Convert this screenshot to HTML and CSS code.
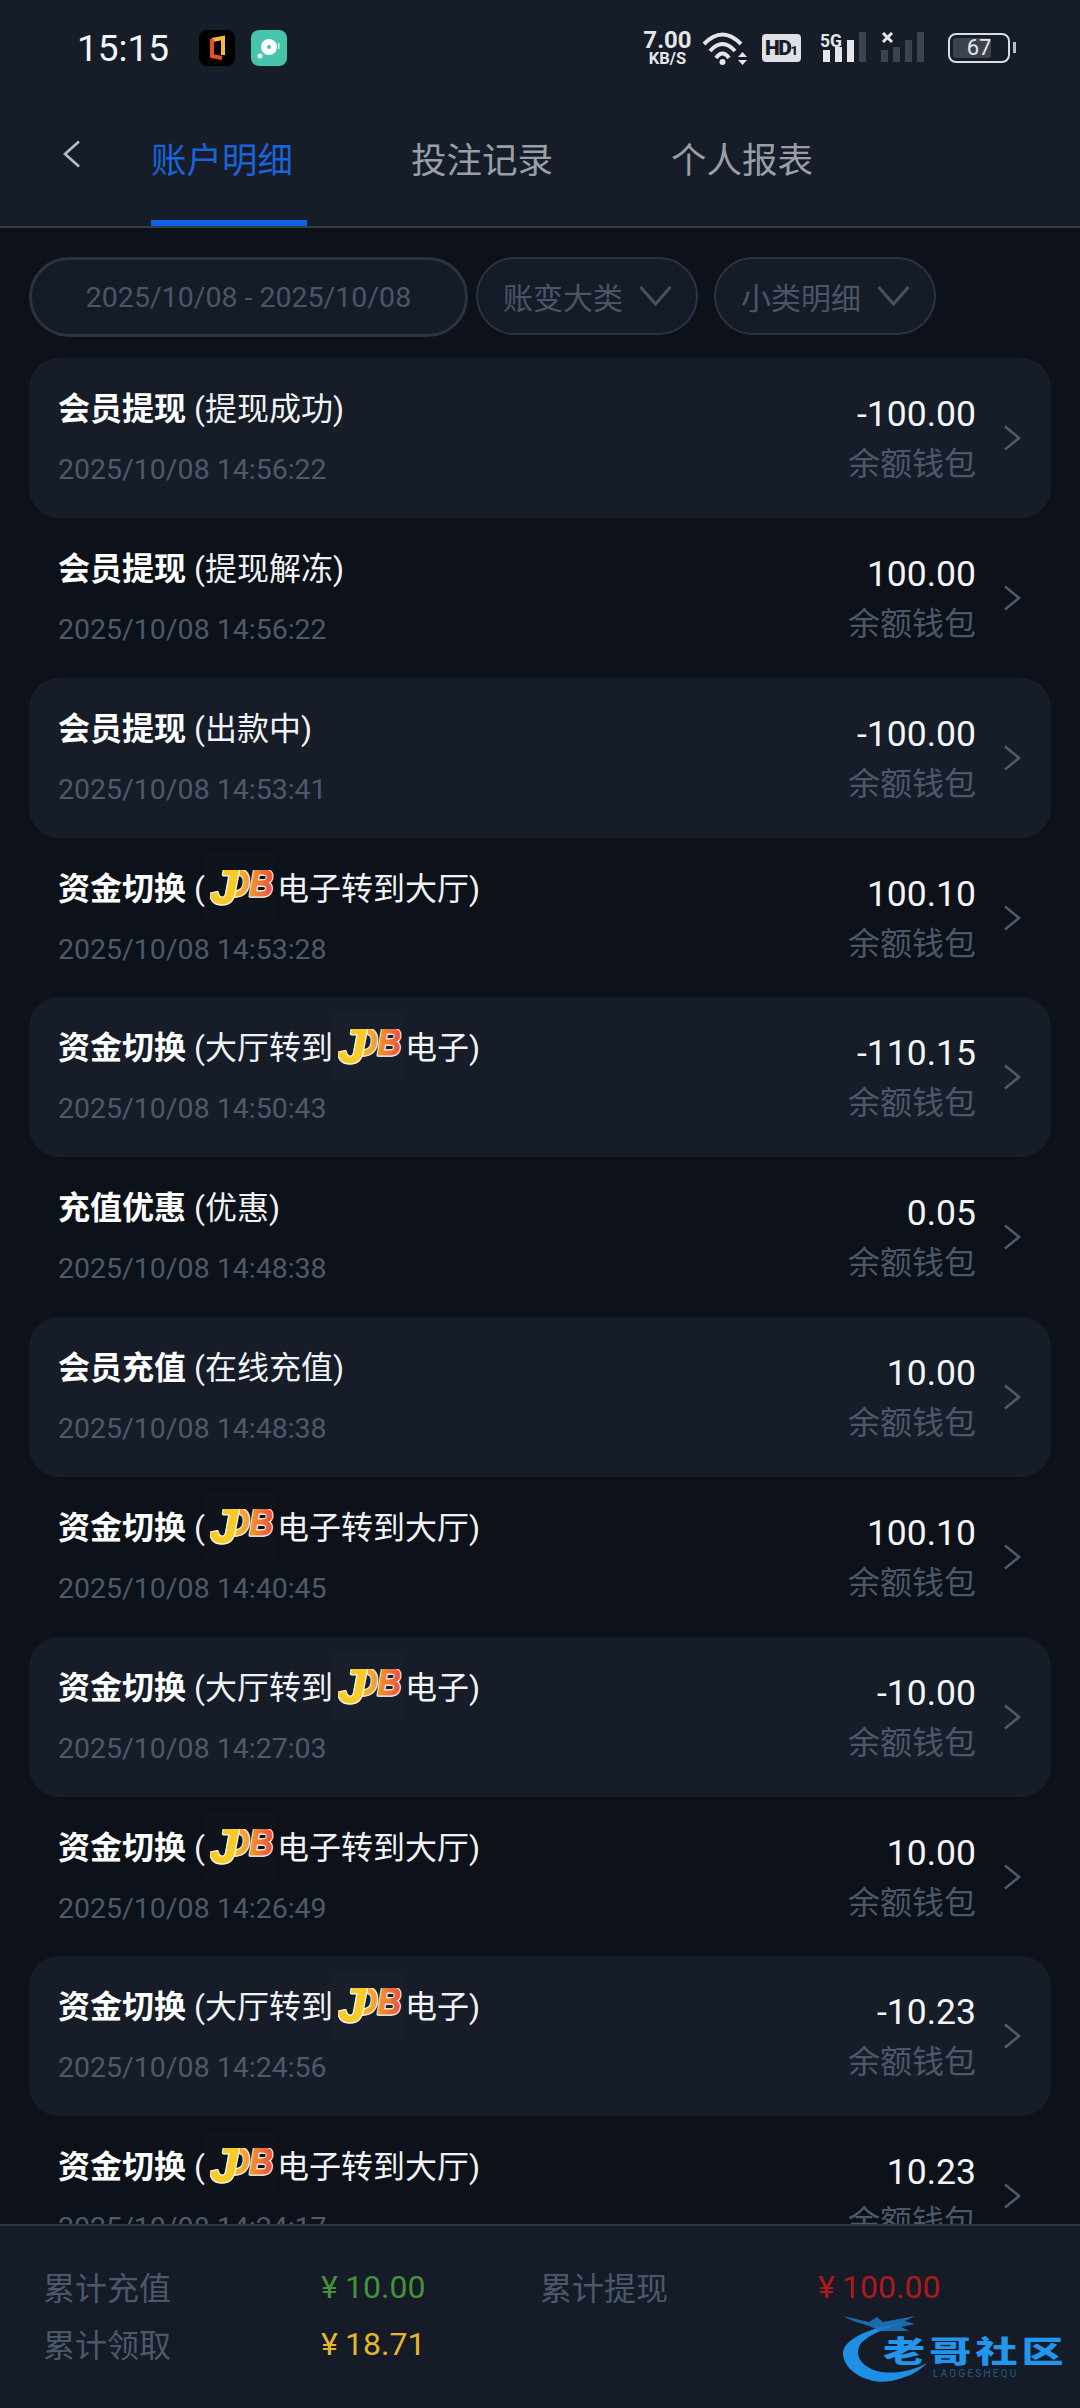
FILE: index.html
```html
<!DOCTYPE html>
<html lang="zh-CN">
<head>
    <meta charset="UTF-8">
    <title>账户明细</title>
    <meta name="viewport" content="width=device-width, initial-scale=1.0">
    <link rel="stylesheet" href="styles.css">
</head>
<body>
    <!-- shared JDB logo and list icons -->
    <svg class="defs" width="0" height="0">
        <defs>
            <linearGradient id="jdbFill" gradientUnits="userSpaceOnUse" x1="14" y1="0" x2="65" y2="0">
                <stop offset="0" stop-color="#f8cf2c"/>
                <stop offset="0.5" stop-color="#f29a2e"/>
                <stop offset="1" stop-color="#e8493f"/>
            </linearGradient>
            <symbol id="jdb" viewBox="0 0 65 38">
                <text class="jdb-db jdb-edge" x="16" y="26" textLength="47" lengthAdjust="spacingAndGlyphs">DB</text>
                <text class="jdb-db" x="16" y="26" fill="url(#jdbFill)" stroke="url(#jdbFill)" stroke-width="1.2" textLength="47" lengthAdjust="spacingAndGlyphs">DB</text>
                <text class="jdb-j jdb-edge" x="0" y="34">J</text>
                <text class="jdb-j" x="0" y="34" fill="#f8cb2a" stroke="#f8cb2a" stroke-width="1.2">J</text>
            </symbol>
            <symbol id="chev" viewBox="0 0 18 26">
                <path d="M2 1.5 16 13 2 24.5" fill="none" stroke="currentColor" stroke-width="2.6"/>
            </symbol>
        </defs>
    </svg>

    <div class="top">
        <div class="statusbar">
            <span class="time">15:15</span>
            <svg class="app-icon app-first" viewBox="0 0 36 36">
                <rect width="36" height="36" rx="8" fill="#000"/>
                <path d="M13 10 24 8V25" fill="none" stroke="#f2bb3c" stroke-width="4"/>
                <path d="M13 9V26L23 28" fill="none" stroke="#e4531f" stroke-width="4"/>
            </svg>
            <svg class="app-icon" viewBox="0 0 36 36">
                <rect width="36" height="36" rx="8" fill="#47c4ac"/>
                <circle cx="18" cy="17" r="8" fill="#fff"/>
                <circle cx="18" cy="17" r="2" fill="#47c4ac"/>
                <circle cx="9" cy="26" r="2.5" fill="#e6f7f3"/>
                <rect x="27" y="13" width="1.5" height="6" fill="#d5f2ec"/>
            </svg>
            <div class="status-right">
                <div class="speed"><b>7.00</b><span>KB/S</span></div>
                <svg class="wifi" viewBox="0 0 45 33">
                    <g fill="none" stroke="#e3e5e8" stroke-width="4">
                        <path d="M2 12Q20.5 -7 39 12"/>
                        <path d="M8 19Q20.5 5 33 19"/>
                        <path d="M14 26Q20.5 17 27 26"/>
                    </g>
                    <circle cx="20.5" cy="30" r="3" fill="#e3e5e8"/>
                    <path d="M36 25 40.500 20 45 25ZM36 28 45 28 40.500 33Z" fill="#e3e5e8"/>
                </svg>
                <div class="hd">HD<small>1</small></div>
                <svg class="signal-a" viewBox="0 0 46 33">
                    <text class="net" x="0" y="15" textLength="22" lengthAdjust="spacingAndGlyphs">5G</text>
                    <rect x="3" y="18" width="7" height="12" fill="#e3e5e8"/>
                    <rect x="15" y="15" width="7" height="15" fill="#e3e5e8"/>
                    <rect x="27" y="8" width="7" height="22" fill="#e3e5e8"/>
                    <rect x="39" y="0" width="7" height="30" fill="#3c434e"/>
                </svg>
                <svg class="signal-b" viewBox="0 0 43 33">
                    <path d="M2 1 11 10M11 1 2 10" stroke="#e3e5e8" stroke-width="3"/>
                    <rect x="0" y="18" width="7" height="12" fill="#3c434e"/>
                    <rect x="12" y="15" width="7" height="15" fill="#3c434e"/>
                    <rect x="24" y="8" width="7" height="22" fill="#3c434e"/>
                    <rect x="36" y="0" width="7" height="30" fill="#3c434e"/>
                </svg>
                <div class="battery"><span class="battery-level"></span><span class="battery-num">67</span></div>
            </div>
        </div>
        <nav class="tabs">
            <svg class="back" viewBox="0 0 18 28"><path d="M16 1.500 2 14 16 26.500" fill="none" stroke="#b9bdc3" stroke-width="2.600"/></svg>
            <a class="tab active">账户明细</a>
            <a class="tab">投注记录</a>
            <a class="tab">个人报表</a>
        </nav>
    </div>

    <div class="filters">
        <div class="pill pill-date">2025/10/08 - 2025/10/08</div>
        <div class="pill pill-type">账变大类<svg viewBox="0 0 33 20"><path d="M1.500 1 16.500 18 31.500 1" fill="none" stroke="#465264" stroke-width="3"/></svg></div>
        <div class="pill pill-sub">小类明细<svg viewBox="0 0 33 20"><path d="M1.500 1 16.500 18 31.500 1" fill="none" stroke="#465264" stroke-width="3"/></svg></div>
    </div>

    <div class="list">
        <div class="row">
            <div class="row-main">
                <div class="row-title"><b>会员提现</b> (提现成功)</div>
                <div class="row-date">2025/10/08 14:56:22</div>
            </div>
            <div class="row-side"><div class="amount">-100.00</div><div class="wallet">余额钱包</div></div>
            <svg class="chev"><use href="#chev"/></svg>
        </div>
        <div class="row">
            <div class="row-main">
                <div class="row-title"><b>会员提现</b> (提现解冻)</div>
                <div class="row-date">2025/10/08 14:56:22</div>
            </div>
            <div class="row-side"><div class="amount">100.00</div><div class="wallet">余额钱包</div></div>
            <svg class="chev"><use href="#chev"/></svg>
        </div>
        <div class="row">
            <div class="row-main">
                <div class="row-title"><b>会员提现</b> (出款中)</div>
                <div class="row-date">2025/10/08 14:53:41</div>
            </div>
            <div class="row-side"><div class="amount">-100.00</div><div class="wallet">余额钱包</div></div>
            <svg class="chev"><use href="#chev"/></svg>
        </div>
        <div class="row">
            <div class="row-main">
                <div class="row-title"><b>资金切换</b> (<span class="jdb"><svg><use href="#jdb"/></svg></span>电子转到大厅)</div>
                <div class="row-date">2025/10/08 14:53:28</div>
            </div>
            <div class="row-side"><div class="amount">100.10</div><div class="wallet">余额钱包</div></div>
            <svg class="chev"><use href="#chev"/></svg>
        </div>
        <div class="row">
            <div class="row-main">
                <div class="row-title"><b>资金切换</b> (大厅转到<span class="jdb"><svg><use href="#jdb"/></svg></span>电子)</div>
                <div class="row-date">2025/10/08 14:50:43</div>
            </div>
            <div class="row-side"><div class="amount">-110.15</div><div class="wallet">余额钱包</div></div>
            <svg class="chev"><use href="#chev"/></svg>
        </div>
        <div class="row">
            <div class="row-main">
                <div class="row-title"><b>充值优惠</b> (优惠)</div>
                <div class="row-date">2025/10/08 14:48:38</div>
            </div>
            <div class="row-side"><div class="amount">0.05</div><div class="wallet">余额钱包</div></div>
            <svg class="chev"><use href="#chev"/></svg>
        </div>
        <div class="row">
            <div class="row-main">
                <div class="row-title"><b>会员充值</b> (在线充值)</div>
                <div class="row-date">2025/10/08 14:48:38</div>
            </div>
            <div class="row-side"><div class="amount">10.00</div><div class="wallet">余额钱包</div></div>
            <svg class="chev"><use href="#chev"/></svg>
        </div>
        <div class="row">
            <div class="row-main">
                <div class="row-title"><b>资金切换</b> (<span class="jdb"><svg><use href="#jdb"/></svg></span>电子转到大厅)</div>
                <div class="row-date">2025/10/08 14:40:45</div>
            </div>
            <div class="row-side"><div class="amount">100.10</div><div class="wallet">余额钱包</div></div>
            <svg class="chev"><use href="#chev"/></svg>
        </div>
        <div class="row">
            <div class="row-main">
                <div class="row-title"><b>资金切换</b> (大厅转到<span class="jdb"><svg><use href="#jdb"/></svg></span>电子)</div>
                <div class="row-date">2025/10/08 14:27:03</div>
            </div>
            <div class="row-side"><div class="amount">-10.00</div><div class="wallet">余额钱包</div></div>
            <svg class="chev"><use href="#chev"/></svg>
        </div>
        <div class="row">
            <div class="row-main">
                <div class="row-title"><b>资金切换</b> (<span class="jdb"><svg><use href="#jdb"/></svg></span>电子转到大厅)</div>
                <div class="row-date">2025/10/08 14:26:49</div>
            </div>
            <div class="row-side"><div class="amount">10.00</div><div class="wallet">余额钱包</div></div>
            <svg class="chev"><use href="#chev"/></svg>
        </div>
        <div class="row">
            <div class="row-main">
                <div class="row-title"><b>资金切换</b> (大厅转到<span class="jdb"><svg><use href="#jdb"/></svg></span>电子)</div>
                <div class="row-date">2025/10/08 14:24:56</div>
            </div>
            <div class="row-side"><div class="amount">-10.23</div><div class="wallet">余额钱包</div></div>
            <svg class="chev"><use href="#chev"/></svg>
        </div>
        <div class="row">
            <div class="row-main">
                <div class="row-title"><b>资金切换</b> (<span class="jdb"><svg><use href="#jdb"/></svg></span>电子转到大厅)</div>
                <div class="row-date">2025/10/08 14:24:17</div>
            </div>
            <div class="row-side"><div class="amount">10.23</div><div class="wallet">余额钱包</div></div>
            <svg class="chev"><use href="#chev"/></svg>
        </div>
    </div>

    <div class="totals">
        <div class="totals-label">累计充值</div>
        <div class="totals-value green"><i>¥</i>10.00</div>
        <div class="totals-label">累计提现</div>
        <div class="totals-value red"><i>¥</i>100.00</div>
        <div class="totals-label">累计领取</div>
        <div class="totals-value yellow"><i>¥</i>18.71</div>
    </div>

    <!-- community stamp over the bottom bar -->
    <div class="stamp">
        <svg viewBox="0 0 220 70">
            <path d="M60 10C25 14 -2 28 0 42 2 60 28 72 48 68 62 65 75 60 84 50 70 58 50 62 34 58 20 54 12 44 16 34 20 24 40 16 60 10Z" fill="#1f8fe6"/>
            <path d="M0 3 26 9 34 4 40 9 72 3 62 8 72 11 58 14 66 18 38 18 26 13 10 8Z" fill="#1b78c4" opacity="0.85"/>
        </svg>
        <div class="stamp-name">老哥社区</div>
        <div class="stamp-sub">LAOGESHEQU</div>
    </div>
</body>
</html>
```

FILE: styles.css
```css
* {
    box-sizing: border-box;
}
html, body {
    margin: 0;
    padding: 0;
}
body {
    width: 1080px;
    height: 2408px;
    overflow: hidden;
    display: flex;
    flex-direction: column;
    position: relative;
    background: #0d1119;
    font-family: Roboto, "Noto Sans CJK SC", sans-serif;
    color: #fff;
}
.defs {
    position: absolute;
}

/* top bar */
.top {
    height: 228px;
    flex: none;
    background: #161d29;
    border-bottom: 2px solid #333b47;
}
.statusbar {
    height: 96px;
    display: flex;
    align-items: center;
    padding-left: 77px;
}
.time {
    font-size: 37px;
    color: #f4f5f6;
    width: 122px;
}
.app-icon {
    width: 36px;
    height: 36px;
}
.app-first {
    margin-right: 16px;
}
.status-right {
    margin-left: auto;
    padding-right: 65px;
    display: flex;
    align-items: center;
    color: #e3e5e8;
}
.speed {
    width: 49px;
    display: flex;
    flex-direction: column;
    align-items: center;
    margin-right: 10px;
}
.speed b {
    font-size: 24px;
    font-weight: 700;
    line-height: 21px;
}
.speed span {
    font-size: 16.5px;
    font-weight: 700;
    line-height: 15px;
}
.wifi {
    width: 45px;
    height: 33px;
    margin-right: 15px;
}
.hd {
    width: 39px;
    height: 28px;
    border-radius: 4px;
    background: #dfe1e4;
    color: #161d29;
    font-size: 21px;
    font-weight: 900;
    line-height: 28px;
    text-align: center;
    letter-spacing: -1.5px;
    margin-right: 19px;
}
.hd small {
    font-size: 13px;
    letter-spacing: 0;
}
.signal-a {
    width: 46px;
    height: 33px;
    margin-right: 15px;
    overflow: visible;
}
.signal-b {
    width: 43px;
    height: 33px;
    margin-right: 24px;
}
.net {
    font-size: 18px;
    font-weight: 700;
    fill: #e3e5e8;
}
.battery {
    width: 62px;
    height: 30px;
    border: 2.5px solid #d9dce0;
    border-radius: 8px;
    position: relative;
    padding: 3px;
    margin-right: 5px;
}
.battery::after {
    content: "";
    position: absolute;
    right: -8px;
    top: 7px;
    width: 3px;
    height: 11px;
    background: #b9bdc3;
}
.battery-level {
    display: block;
    width: 38px;
    height: 100%;
    background: #3c434e;
    border-radius: 3px;
}
.battery-num {
    position: absolute;
    left: 0;
    right: 0;
    top: 0;
    text-align: center;
    font-size: 22px;
    line-height: 25px;
    color: #e3e5e8;
}

/* tabs */
.tabs {
    height: 130px;
    display: flex;
    align-items: stretch;
    gap: 104px;
    padding-left: 151px;
    position: relative;
}
.back {
    position: absolute;
    left: 63px;
    top: 44px;
    width: 18px;
    height: 28px;
}
.tab {
    width: 156px;
    font-size: 35.5px;
    line-height: 130px;
    color: #9a9fa7;
    white-space: nowrap;
}
.tab.active {
    color: #1a63d8;
    border-bottom: 6px solid #0f62e6;
}

/* filters */
.filters {
    height: 130px;
    flex: none;
    display: flex;
    align-items: flex-start;
    padding: 29px 0 0 29px;
}
.pill {
    height: 78px;
    border: 2px solid #2b3342;
    border-radius: 40px;
    background: #151c27;
    color: #4a5668;
    display: flex;
    align-items: center;
    font-size: 30px;
}
.pill svg {
    width: 33px;
    height: 20px;
    margin-left: 16px;
}
.pill-date {
    width: 439px;
    height: 80px;
    border-width: 3px;
    justify-content: center;
    font-size: 28.5px;
    margin-right: 8px;
}
.pill-type {
    width: 222px;
    padding-left: 25px;
    margin-right: 16px;
}
.pill-sub {
    width: 222px;
    padding-left: 25px;
}

/* records */
.list {
    flex: 1;
    overflow: hidden;
    padding: 0 29px;
}
.row {
    height: 159.85px;
    display: flex;
    align-items: flex-start;
    padding-left: 29px;
    border-radius: 30px;
}
.row:nth-child(odd) {
    background: #161d28;
}
.row-main {
    flex: 1;
    padding-top: 29px;
}
.row-title {
    height: 44px;
    font-size: 32px;
    line-height: 44px;
    white-space: nowrap;
    color: #f2f3f4;
}
.row-title b {
    font-weight: 700;
    color: #fff;
}
.jdb {
    display: inline-block;
    vertical-align: top;
    width: 70px;
    height: 68px;
    margin: -14px 2px -10px 0;
    padding: 17px 0 0 5px;
    background: rgba(255, 255, 255, 0.012);
}
.jdb svg {
    display: block;
    width: 65px;
    height: 38px;
    overflow: visible;
}
.jdb-j {
    font-family: "Liberation Sans", sans-serif;
    font-size: 50px;
    font-weight: 700;
    font-style: italic;
}
.jdb-db {
    font-family: "Liberation Sans", sans-serif;
    font-size: 37px;
    font-weight: 700;
    font-style: italic;
}
.jdb-edge {
    fill: #fff;
    stroke: #fff;
    stroke-width: 3.5px;
    stroke-linejoin: round;
}
.row-date {
    margin-top: 19px;
    font-size: 28.500px;
    line-height: 40px;
    color: #4e596a;
}
.row-side {
    padding-top: 36px;
    text-align: right;
}
.amount {
    font-size: 35.500px;
    line-height: 40px;
    color: #f4f5f6;
}
.wallet {
    margin-top: 8px;
    font-size: 32px;
    line-height: 44px;
    color: #4c586a;
}
.chev {
    width: 18px;
    height: 26px;
    margin: 67px 30px 0 27px;
    color: #4f5a6b;
}

/* bottom totals */
.totals {
    height: 184px;
    flex: none;
    background: #151c27;
    border-top: 2px solid #2e3541;
    display: grid;
    grid-template-columns: 278px 219px 278px 1fr;
    grid-auto-rows: 57px;
    align-items: center;
    padding: 31px 0 0 43px;
    position: relative;
}
.totals-label {
    font-size: 32px;
    color: #4c586a;
}
.totals-value {
    font-size: 32px;
    padding-top: 3px;
}
.totals-value i {
    display: inline-block;
    width: 24px;
    font-style: normal;
}
.green {
    color: #46923a;
}
.red {
    color: #ac1b1b;
}
.yellow {
    color: #e6b52f;
    grid-column: 2;
}
.totals-label:nth-child(5) {
    grid-column: 1;
}

.stamp {
    position: absolute;
    left: 843px;
    top: 2313px;
    width: 220px;
    height: 70px;
}
.stamp svg {
    position: absolute;
    left: 0;
    top: 0;
    width: 220px;
    height: 70px;
}
.stamp-name {
    position: absolute;
    left: 40px;
    top: 21px;
    font-family: "Noto Sans CJK SC", sans-serif;
    font-size: 30px;
    font-weight: 900;
    line-height: 30px;
    letter-spacing: 3px;
    white-space: nowrap;
    color: #2196ea;
    transform: scaleX(1.4);
    transform-origin: left center;
}
.stamp-sub {
    position: absolute;
    left: 90px;
    top: 56px;
    font-size: 10px;
    line-height: 10px;
    letter-spacing: 2.200px;
    color: #1c5c88;
}
```
